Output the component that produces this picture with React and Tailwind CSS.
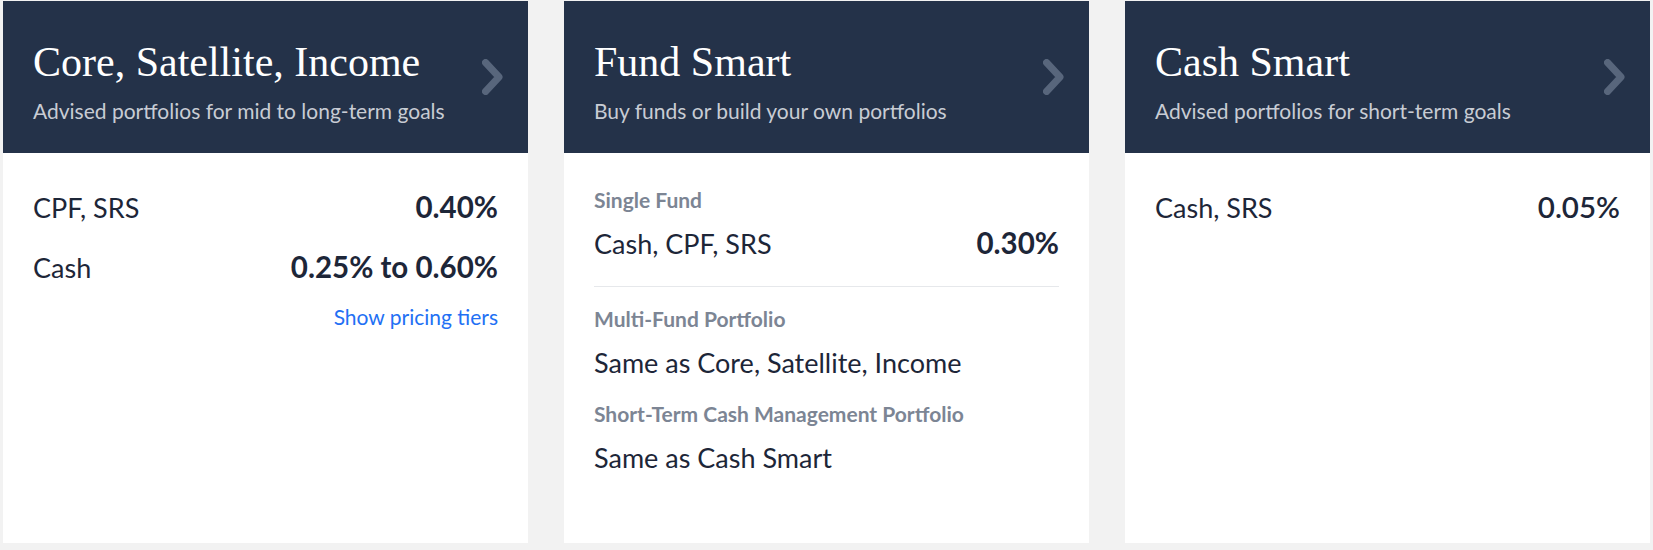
import React from "react";

const Chevron = () => (
  <svg width="21" height="36" viewBox="0 0 21 36" fill="none" className="shrink-0">
    <path d="M3.5 3.5 L17 18 L3.5 32.5" stroke="#58667c" strokeWidth="7" strokeLinecap="round" strokeLinejoin="round" />
  </svg>
);

const Header = ({ title, subtitle }) => (
  <div className="flex items-center justify-between bg-[#243249] h-[152px] pl-[30px] pr-[25px]">
    <div className="flex flex-col pt-[7px]">
      <div className="font-['Liberation_Serif',serif] text-[42px] leading-[48px] text-white">{title}</div>
      <div className="mt-[13px] font-['Lato',sans-serif] text-[21px] leading-[24px] text-[#c8ccd4]">{subtitle}</div>
    </div>
    <Chevron />
  </div>
);

const Row = ({ label, value, bold = true, className = "" }) => (
  <div className={"flex items-baseline justify-between " + className}>
    <span className="text-[27px] leading-[36px] text-[#1d2638]">{label}</span>
    <span className={"text-[29.5px] leading-[36px] text-[#1d2638] " + (bold ? "font-bold" : "font-semibold")}>{value}</span>
  </div>
);

const Card = ({ title, subtitle, children }) => (
  <div className="flex flex-col w-[525px] h-[542px] bg-white">
    <Header title={title} subtitle={subtitle} />
    <div className="flex flex-col px-[30px] pt-[36px] font-['Lato',sans-serif]">{children}</div>
  </div>
);

const Label = ({ children, className = "" }) => (
  <div className={"text-[21px] leading-[24px] font-bold text-[#7c8594] " + className}>{children}</div>
);

export default function App() {
  return (
    <div className="flex gap-[36px] px-[3px] pt-[1px] h-[550px] w-[1653px] bg-[#f2f2f2]">
      <Card title="Core, Satellite, Income" subtitle="Advised portfolios for mid to long-term goals">
        <Row label="CPF, SRS" value="0.40%" />
        <Row label="Cash" value="0.25% to 0.60%" className="mt-[23px]" />
        <div className="mt-[19px] text-right text-[21px] leading-[24px] text-[#2270f4]">Show pricing tiers</div>
      </Card>
      <Card title="Fund Smart" subtitle="Buy funds or build your own portfolios">
        <Label className="-mt-[1px]">Single Fund</Label>
        <Row label="Cash, CPF, SRS" value="0.30%" className="mt-[13px]" />
        <div className="mt-[24px] h-px bg-[#e6e8eb]" />
        <Label className="mt-[20px]">Multi-Fund Portfolio</Label>
        <div className="mt-[14px] text-[27px] leading-[36px] text-[#1d2638]">Same as Core, Satellite, Income</div>
        <Label className="mt-[21px]">Short-Term Cash Management Portfolio</Label>
        <div className="mt-[14px] text-[27px] leading-[36px] text-[#1d2638]">Same as Cash Smart</div>
      </Card>
      <Card title="Cash Smart" subtitle="Advised portfolios for short-term goals">
        <Row label="Cash, SRS" value="0.05%" bold={false} />
      </Card>
    </div>
  );
}
